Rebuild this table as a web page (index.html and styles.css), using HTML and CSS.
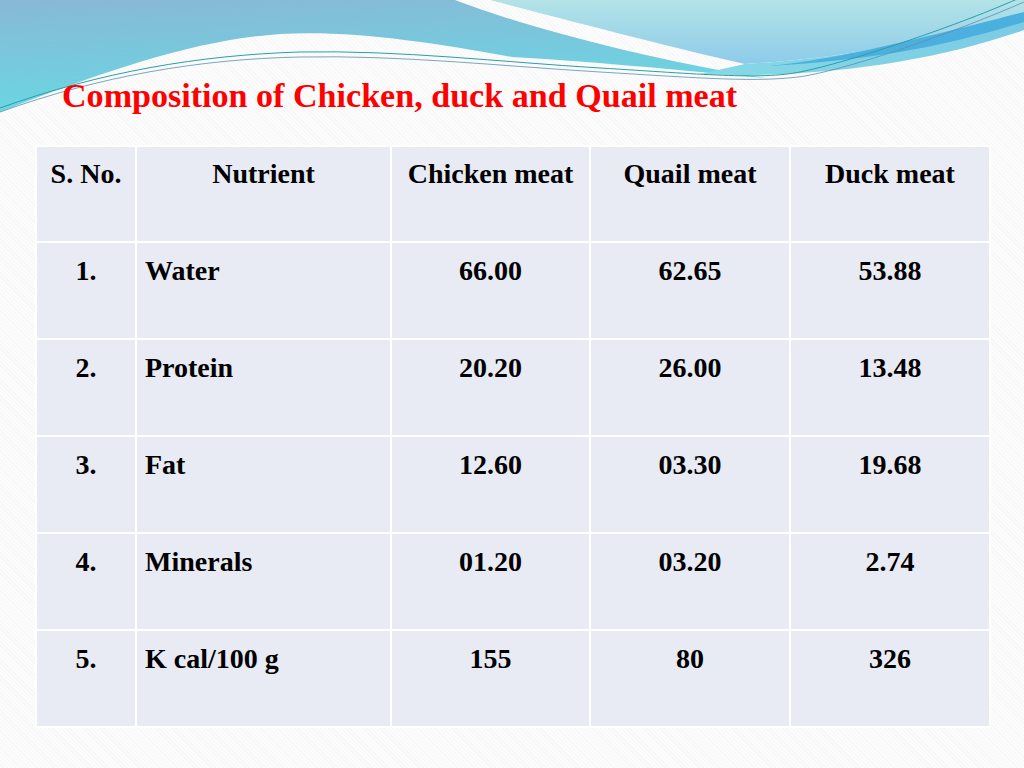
FILE: index.html
```html
<!DOCTYPE html>
<html lang="en">
<head>
<meta charset="utf-8">
<title>Composition of Chicken, duck and Quail meat</title>
<link rel="stylesheet" href="styles.css">
</head>
<body>
<div class="slide">
  <svg class="waves" width="1024" height="130" viewBox="0 0 1024 130" aria-hidden="true">
    <defs>
      <linearGradient id="gA" x1="0" y1="0" x2="0.25" y2="1">
        <stop offset="0" stop-color="#89b8d6"/>
        <stop offset="1" stop-color="#68d8e3"/>
      </linearGradient>
      <linearGradient id="gB" x1="0" y1="0" x2="0" y2="1">
        <stop offset="0" stop-color="#b3e3e6"/>
        <stop offset="1" stop-color="#8ecbea"/>
      </linearGradient>
      <linearGradient id="gC" x1="0" y1="0" x2="1" y2="0">
        <stop offset="0" stop-color="#86d8e6"/>
        <stop offset="1" stop-color="#7ccbe4"/>
      </linearGradient>
    </defs>
    <path d="M0,0 L455,0 C520,25 640,58 765,78 C700,72 600,62 512,57 C430,42 350,30 280,34 C200,40 120,65 0,112 Z" fill="url(#gA)"/>
    <path d="M490,0 L1024,0 L1024,12 C950,35 860,58 745,64 C650,42 560,18 490,0 Z" fill="url(#gB)"/>
    <path d="M700,74 C820,80 940,60 1024,30 L1024,12 C950,35 860,58 745,64 Z" fill="url(#gC)"/>
    <path d="M770,66 C830,60 900,44 1024,12 L1024,22 C940,48 870,60 770,66 Z" fill="#4cb0de"/>
    <path d="M0,108 C100,72 200,55 300,52 C400,50 500,62 600,68 C700,74 760,80 800,72 C850,62 960,25 1024,-4" fill="none" stroke="#2a9eaa" stroke-width="1"/>
    <path d="M0,112 C100,76 200,59 300,57 C400,55 500,66 600,72 C700,78 760,83 805,76 C860,66 960,30 1024,2" fill="none" stroke="#5a8fb0" stroke-width="0.8"/>
  </svg>
  <h1 class="title">Composition of Chicken, duck and Quail meat</h1>
  <table class="comp">
    <colgroup>
      <col class="c-no"><col class="c-name"><col class="c-val"><col class="c-val2"><col class="c-val2">
    </colgroup>
    <tr class="head">
      <td class="ctr">S. No.</td><td class="ctr">Nutrient</td><td class="ctr">Chicken meat</td><td class="ctr">Quail meat</td><td class="ctr">Duck meat</td>
    </tr>
    <tr>
      <td class="ctr">1.</td><td class="name">Water</td><td class="ctr">66.00</td><td class="ctr">62.65</td><td class="ctr">53.88</td>
    </tr>
    <tr>
      <td class="ctr">2.</td><td class="name">Protein</td><td class="ctr">20.20</td><td class="ctr">26.00</td><td class="ctr">13.48</td>
    </tr>
    <tr>
      <td class="ctr">3.</td><td class="name">Fat</td><td class="ctr">12.60</td><td class="ctr">03.30</td><td class="ctr">19.68</td>
    </tr>
    <tr>
      <td class="ctr">4.</td><td class="name">Minerals</td><td class="ctr">01.20</td><td class="ctr">03.20</td><td class="ctr">2.74</td>
    </tr>
    <tr>
      <td class="ctr">5.</td><td class="name">K cal/100 g</td><td class="ctr">155</td><td class="ctr">80</td><td class="ctr">326</td>
    </tr>
  </table>
</div>
</body>
</html>
```

FILE: styles.css
```css
html, body {
  margin: 0;
  padding: 0;
}
body {
  background: #fafafa;
  font-family: "Liberation Serif", "Times New Roman", serif;
}
.slide {
  position: relative;
  width: 1024px;
  height: 768px;
  overflow: hidden;
  box-sizing: border-box;
  padding: 79px 35px 0 35px;
  background: repeating-linear-gradient(45deg, #fcfcfc 0 2px, #f7f7f7 2px 3px);
}
.waves {
  position: absolute;
  left: 0;
  top: 0;
  display: block;
}
.title {
  position: relative;
  margin: 0 0 0 27px;
  font-size: 34.1px;
  line-height: 33.6px;
  font-weight: bold;
  color: #ff0000;
}
.comp {
  margin-top: 32px;
  width: 954px;
  table-layout: fixed;
  border-collapse: collapse;
}
.c-no { width: 100px; }
.c-name { width: 255px; }
.c-val { width: 199px; }
.c-val2 { width: 200px; }
.comp tr { height: 97px; }
.comp tr.head { height: 96px; }
.comp td {
  background: #e8eaf4;
  border: 2px solid #ffffff;
  vertical-align: top;
  padding: 12px 8px 0 8px;
  font-size: 28px;
  line-height: 32px;
  font-weight: bold;
  color: #000000;
  white-space: nowrap;
}
.comp tr.head td { padding-top: 11px; }
.comp td.ctr { text-align: center; }
.comp td.name { text-align: left; }
```
